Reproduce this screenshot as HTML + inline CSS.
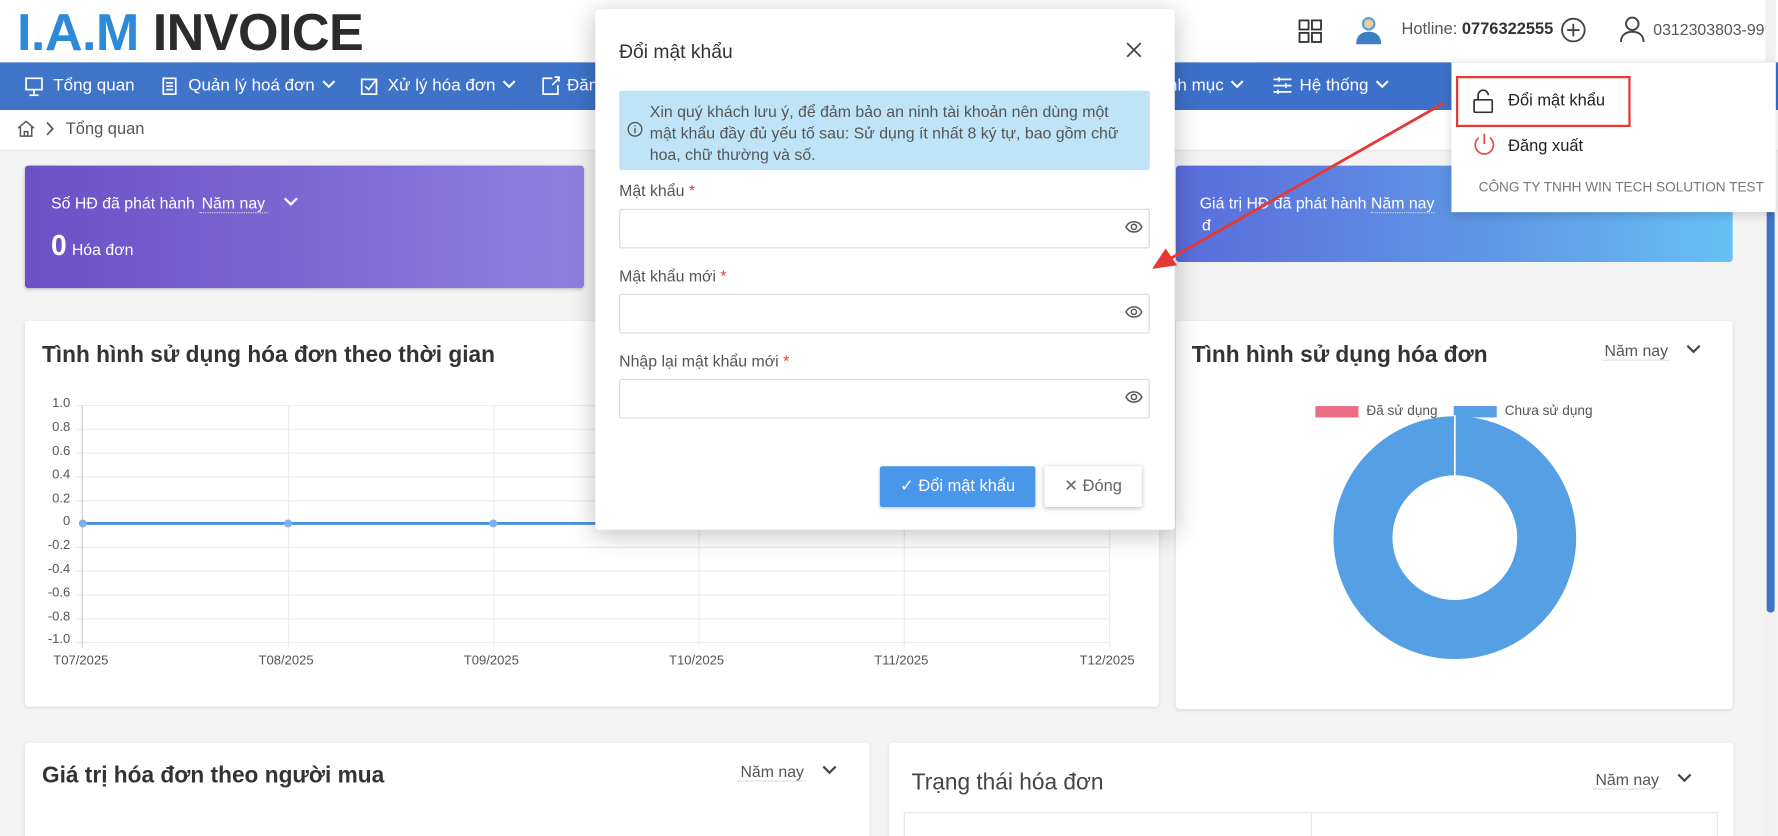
<!DOCTYPE html>
<html><head><meta charset="utf-8"><style>
*{box-sizing:border-box;margin:0;padding:0}
html,body{width:1778px;height:836px;overflow:hidden;background:#f3f3f3}
#w{position:absolute;left:0;top:0;width:1568px;height:737px;transform:scale(1.13393,1.1343);transform-origin:0 0;font-family:"Liberation Sans","DejaVu Sans",sans-serif;color:#333;background:#f3f3f3;overflow:hidden}
.a{position:absolute;white-space:nowrap}
.card{position:absolute;background:#fff;border-radius:3px;box-shadow:0 1px 3px rgba(0,0,0,.1)}
.nav{color:#fff;font-size:15px;top:67px}
.yl{position:absolute;font-size:11.5px;color:#555;text-align:right;width:30px;left:32px}
.xl{position:absolute;font-size:11.5px;color:#555;top:577px}
.inp{position:absolute;left:546px;width:468px;height:35px;border:1px solid #d9d9d9;border-radius:2px;background:#fff}
.lbl{position:absolute;left:546px;font-size:14px;color:#555}
.lbl b{color:#e4393c;font-weight:normal}
.cv{display:inline-block;width:12px;height:8px;margin-left:6px;vertical-align:2px}
</style></head><body><div id="w">
<svg width="0" height="0" style="position:absolute"><defs><symbol id="cv" viewBox="0 0 12 8"><path d="M1 1.5l5 5 5-5" fill="none" stroke="currentColor" stroke-width="1.8"/></symbol></defs></svg>
<!-- header -->
<div class="a" style="left:0;top:0;width:1568px;height:55px;background:#fff"></div>
<div class="a" style="left:15px;top:1px;font-size:46px;font-weight:bold;letter-spacing:-0.5px"><span style="color:#2d8ad9">I.A.M</span> <span style="color:#2b2b2b">INVOICE</span></div>
<svg class="a" style="left:1145px;top:17px" width="21" height="21" viewBox="0 0 21 21" fill="none" stroke="#333" stroke-width="1.6"><rect x="1" y="1" width="8" height="8"/><rect x="12" y="1" width="8" height="8"/><rect x="1" y="12" width="8" height="8"/><rect x="12" y="12" width="8" height="8"/></svg>
<svg class="a" style="left:1193px;top:12px" width="28" height="28" viewBox="0 0 28 28"><circle cx="14" cy="9" r="6" fill="#5aa0d8"/><path d="M3 27c0-8 5-11 11-11s11 3 11 11z" fill="#3b7fc4"/><circle cx="14" cy="9" r="4" fill="#f2c9a0"/></svg>
<div class="a" style="left:1236px;top:18px;font-size:14.5px;color:#555">Hotline: <b style="color:#333">0776322555</b></div>
<svg class="a" style="left:1376px;top:15px" width="23" height="23" viewBox="0 0 23 23" fill="none" stroke="#444" stroke-width="1.6"><circle cx="11.5" cy="11.5" r="10"/><path d="M11.5 6v11M6 11.5h11"/></svg>
<svg class="a" style="left:1428px;top:14px" width="23" height="24" viewBox="0 0 23 24" fill="none" stroke="#444" stroke-width="1.7"><circle cx="11.5" cy="7" r="5.5"/><path d="M1.5 23c0-6 4.5-9 10-9s10 3 10 9"/></svg>
<div class="a" style="left:1458px;top:18px;font-size:14px;color:#555">0312303803-999</div>
<!-- nav -->
<div class="a" style="left:0;top:55px;width:1568px;height:42px;background:linear-gradient(90deg,#3f74c8,#3c6fca)"></div>
<svg class="a" style="left:22px;top:68px" width="16" height="17" viewBox="0 0 16 17" fill="none" stroke="#fff" stroke-width="1.5"><rect x="1" y="1" width="14" height="10"/><path d="M8 11v4M4 16h8"/></svg>
<div class="a nav" style="left:47px">Tổng quan</div>
<svg class="a" style="left:143px;top:68px" width="13" height="16" viewBox="0 0 13 16" fill="none" stroke="#fff" stroke-width="1.5"><rect x="1" y="1" width="11" height="14"/><path d="M3.5 5h6M3.5 8h6M3.5 11h6"/></svg>
<div class="a nav" style="left:166px">Quản lý hoá đơn<svg class="cv"><use href="#cv"/></svg></div>
<svg class="a" style="left:318px;top:68px" width="16" height="16" viewBox="0 0 16 16" fill="none" stroke="#fff" stroke-width="1.5"><rect x="1" y="2" width="13" height="13"/><path d="M4 8l3 3 7-9"/></svg>
<div class="a nav" style="left:342px">Xử lý hóa đơn<svg class="cv"><use href="#cv"/></svg></div>
<svg class="a" style="left:478px;top:67px" width="16" height="17" viewBox="0 0 16 17" fill="none" stroke="#fff" stroke-width="1.5"><path d="M9 2H1v14h13V8M9 8l6-6M11 1h4v4"/></svg>
<div class="a nav" style="left:500px">Đăng</div>
<div class="a nav" style="left:1030px">nh mục<svg class="cv"><use href="#cv"/></svg></div>
<svg class="a" style="left:1123px;top:68px" width="16" height="15" viewBox="0 0 16 15" fill="none" stroke="#fff" stroke-width="1.5"><path d="M0 2h16M0 7.5h16M0 13h16M5 0v4M11 5.5v4M4 11v4"/></svg>
<div class="a nav" style="left:1146px">Hệ thống<svg class="cv"><use href="#cv"/></svg></div>
<!-- breadcrumb -->
<div class="a" style="left:0;top:97px;width:1568px;height:35px;background:#fff;box-shadow:0 1px 2px rgba(0,0,0,.05)"></div>
<svg class="a" style="left:15px;top:106px" width="16" height="15" viewBox="0 0 16 15" fill="none" stroke="#555" stroke-width="1.3"><path d="M1 7L8 1l7 6M3 6v8h10V6M6.5 14v-4h3v4"/></svg>
<svg class="a" style="left:40px;top:107px" width="8" height="13" fill="none" stroke="#555" stroke-width="1.5"><path d="M1.5 1l5 5.5-5 5.5"/></svg>
<div class="a" style="left:58px;top:106px;font-size:14.5px;color:#555">Tổng quan</div>
<!-- cards -->
<div class="a" style="left:22px;top:146px;width:493px;height:108px;border-radius:3px;background:linear-gradient(90deg,#6b50c6,#8f80df);box-shadow:0 1px 3px rgba(0,0,0,.2)"></div>
<div class="a" style="left:45px;top:171px;font-size:14px;color:#fff">Số HĐ đã phát hành <span style="border-bottom:1px dotted #ddd;padding:0 2px">Năm nay</span> &nbsp;<svg class="cv" style="width:13px;height:9px"><use href="#cv"/></svg></div>
<div class="a" style="left:45px;top:203px;color:#fff"><span style="font-size:25px;font-weight:bold">0</span> <span style="font-size:14px">Hóa đơn</span></div>
<div class="a" style="left:1037px;top:146px;width:491px;height:85px;border-radius:3px;background:linear-gradient(90deg,#5a6ddc,#5f9ae6 60%,#67c0f5)"></div>
<div class="a" style="left:1058px;top:171px;font-size:14px;color:#fff">Giá trị HĐ đã phát hành <span style="border-bottom:1px dotted #ddd">Năm nay</span></div>
<div class="a" style="left:1060px;top:190px;font-size:14px;color:#fff">đ</div>
<!-- line chart card -->
<div class="card" style="left:22px;top:283px;width:1000px;height:340px"></div>
<div class="a" style="left:37px;top:302px;font-size:20px;font-weight:bold;color:#333">Tình hình sử dụng hóa đơn theo thời gian</div>
<svg class="a" style="left:0;top:0" width="1030" height="600">
<g stroke="#ececec" stroke-width="1">
<path d="M66 357.5H978M66 378.5H978M66 399.5H978M66 420.5H978M66 441.5H978M66 482.5H978M66 503.5H978M66 524.5H978M66 545.5H978M66 566.5H978"/>
<path d="M254.5 357V571M435.5 357V571M616.5 357V571M797.5 357V571M978.5 357V571"/>
</g>
<path d="M72.5 357V571" stroke="#ccc"/>
<path d="M72 461.5H978" stroke="#4a90e2" stroke-width="2.5"/>
<g fill="#7fb0ea"><circle cx="73" cy="461.5" r="3.5"/><circle cx="254" cy="461.5" r="3.5"/><circle cx="435" cy="461.5" r="3.5"/></g>
</svg>
<div class="yl" style="top:350px">1.0</div><div class="yl" style="top:371px">0.8</div><div class="yl" style="top:392px">0.6</div><div class="yl" style="top:413px">0.4</div><div class="yl" style="top:434px">0.2</div><div class="yl" style="top:454px">0</div><div class="yl" style="top:475px">-0.2</div><div class="yl" style="top:496px">-0.4</div><div class="yl" style="top:517px">-0.6</div><div class="yl" style="top:538px">-0.8</div><div class="yl" style="top:558px">-1.0</div>
<div class="xl" style="left:47px">T07/2025</div><div class="xl" style="left:228px">T08/2025</div><div class="xl" style="left:409px">T09/2025</div><div class="xl" style="left:590px">T10/2025</div><div class="xl" style="left:771px">T11/2025</div><div class="xl" style="left:952px">T12/2025</div>
<!-- donut card -->
<div class="card" style="left:1037px;top:283px;width:491px;height:342px"></div>
<div class="a" style="left:1051px;top:302px;font-size:20px;font-weight:bold">Tình hình sử dụng hóa đơn</div>
<div class="a" style="left:1413px;top:301px;font-size:14px;color:#555"><span style="border-bottom:1px solid #ddd;padding:0 2px">Năm nay</span> &nbsp;<svg class="cv" style="width:13px;height:9px;color:#444"><use href="#cv"/></svg></div>
<div class="a" style="left:1160px;top:358px;width:38px;height:10px;background:#ec6b85"></div>
<div class="a" style="left:1205px;top:355px;font-size:12px;color:#555">Đã sử dụng</div>
<div class="a" style="left:1282px;top:358px;width:38px;height:10px;background:#55a0e4"></div>
<div class="a" style="left:1327px;top:355px;font-size:12px;color:#555">Chưa sử dụng</div>
<svg class="a" style="left:1175px;top:366px" width="216" height="216"><circle cx="108" cy="108" r="81" fill="none" stroke="#55a0e4" stroke-width="52"/><path d="M108 0V55" stroke="#fff" stroke-width="1.5"/></svg>
<!-- bottom cards -->
<div class="card" style="left:22px;top:655px;width:745px;height:90px"></div>
<div class="a" style="left:37px;top:673px;font-size:20px;font-weight:bold">Giá trị hóa đơn theo người mua</div>
<div class="a" style="left:651px;top:672px;font-size:14px;color:#555"><span style="border-bottom:1px solid #ddd;padding:0 2px">Năm nay</span> &nbsp;<svg class="cv" style="width:13px;height:9px;color:#444"><use href="#cv"/></svg></div>
<div class="card" style="left:784px;top:655px;width:745px;height:90px"></div>
<div class="a" style="left:804px;top:679px;font-size:20px;color:#444">Trạng thái hóa đơn</div>
<div class="a" style="left:1405px;top:679px;font-size:14px;color:#555"><span style="border-bottom:1px solid #ddd;padding:0 2px">Năm nay</span> &nbsp;<svg class="cv" style="width:13px;height:9px;color:#444"><use href="#cv"/></svg></div>
<div class="a" style="left:797px;top:716px;width:718px;height:30px;border:1px solid #e5e5e5"></div>
<div class="a" style="left:1156px;top:716px;width:1px;height:30px;background:#e5e5e5"></div>
<!-- scrollbar -->
<div class="a" style="left:1557px;top:0;width:9px;height:737px;background:#f1f1f1"></div>
<div class="a" style="left:1558px;top:60px;width:7px;height:480px;background:#3f74c8;border-radius:3px"></div>
<!-- modal -->
<div class="a" style="left:525px;top:8px;width:511px;height:459px;background:#fff;border-radius:3px;box-shadow:0 4px 22px rgba(0,0,0,.25)"></div>
<div class="a" style="left:546px;top:36px;font-size:17px;color:#333">Đổi mật khẩu</div>
<svg class="a" style="left:993px;top:37px" width="14" height="14" stroke="#444" stroke-width="1.5"><path d="M1 1l12 12M13 1L1 13"/></svg>
<div class="a" style="left:546px;top:80px;width:468px;height:70px;background:#bfe4f8;border-radius:2px"></div>
<svg class="a" style="left:553px;top:107px" width="14" height="14" fill="none" stroke="#555" stroke-width="1.2"><circle cx="7" cy="7" r="6"/><path d="M7 6v4.5M7 3.5v1"/></svg>
<div class="a" style="left:573px;top:89px;font-size:14px;color:#555;line-height:19px;white-space:normal;width:430px">Xin quý khách lưu ý, để đảm bảo an ninh tài khoản nên dùng một mật khẩu đầy đủ yếu tố sau: Sử dụng ít nhất 8 ký tự, bao gồm chữ hoa, chữ thường và số.</div>
<div class="lbl" style="top:160px">Mật khẩu <b>*</b></div>
<div class="inp" style="top:184px"></div>
<div class="lbl" style="top:235px">Mật khẩu mới <b>*</b></div>
<div class="inp" style="top:259px"></div>
<div class="lbl" style="top:310px">Nhập lại mật khẩu mới <b>*</b></div>
<div class="inp" style="top:334px"></div>
<svg class="a" style="left:992px;top:194px" width="16" height="12" fill="none" stroke="#555" stroke-width="1.3"><path d="M1 6c3-6 11-6 14 0c-3 6-11 6-14 0z"/><circle cx="8" cy="6" r="2.3"/></svg>
<svg class="a" style="left:992px;top:269px" width="16" height="12" fill="none" stroke="#555" stroke-width="1.3"><path d="M1 6c3-6 11-6 14 0c-3 6-11 6-14 0z"/><circle cx="8" cy="6" r="2.3"/></svg>
<svg class="a" style="left:992px;top:344px" width="16" height="12" fill="none" stroke="#555" stroke-width="1.3"><path d="M1 6c3-6 11-6 14 0c-3 6-11 6-14 0z"/><circle cx="8" cy="6" r="2.3"/></svg>
<div class="a" style="left:776px;top:411px;width:137px;height:36px;background:#4a96ea;border-radius:2px;box-shadow:0 1px 3px rgba(0,0,0,.2);color:#fff;font-size:14.5px;line-height:36px;text-align:center">✓ Đổi mật khẩu</div>
<div class="a" style="left:921px;top:411px;width:86px;height:36px;background:#fff;border-radius:2px;box-shadow:0 1px 4px rgba(0,0,0,.25);color:#666;font-size:14.5px;line-height:36px;text-align:center">✕ Đóng</div>
<!-- dropdown -->
<div class="a" style="left:1280px;top:55px;width:286px;height:132px;background:#fff;box-shadow:0 2px 8px rgba(0,0,0,.18)"></div>
<div class="a" style="left:1284px;top:67px;width:154px;height:45px;border:2px solid #e53935"></div>
<svg class="a" style="left:1299px;top:78px" width="18" height="22" fill="none" stroke="#333" stroke-width="1.5"><rect x="1" y="10" width="16" height="11" rx="1"/><path d="M4.5 10V6a4.5 4.5 0 0 1 9 0"/></svg>
<div class="a" style="left:1330px;top:81px;font-size:14.5px;color:#222">Đổi mật khẩu</div>
<svg class="a" style="left:1298px;top:117px" width="22" height="23" fill="none" stroke="#e04b4b" stroke-width="1.5"><path d="M11 1v9M6 4.5a8 8 0 1 0 10 0"/></svg>
<div class="a" style="left:1330px;top:121px;font-size:14.5px;color:#222">Đăng xuất</div>
<div class="a" style="left:1304px;top:158px;font-size:12px;color:#777">CÔNG TY TNHH WIN TECH SOLUTION TEST</div>
<!-- arrow -->
<svg class="a" style="left:0;top:0" width="1568" height="737"><path d="M1273 91L1032 228" stroke="#e53935" stroke-width="2.5"/><path d="M1016 237l12-18 10 15z" fill="#e53935"/></svg>
</div></body></html>
